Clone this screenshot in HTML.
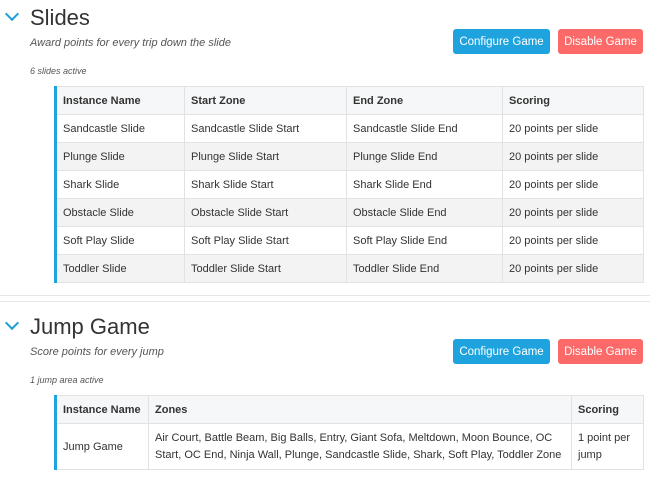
<!DOCTYPE html>
<html><head><style>
*{box-sizing:border-box;margin:0;padding:0}
body{width:650px;height:480px;background:#fff;font-family:"Liberation Sans",sans-serif;color:#333;position:relative;overflow:hidden}
h1{position:absolute;font-weight:normal;font-size:22px;color:#333;left:30px}
.chev{position:absolute;left:7px;width:10px;height:10px;border-right:2px solid #1e9fd6;border-bottom:2px solid #1e9fd6;transform:rotate(45deg)}
.sub{position:absolute;left:30px;font-style:italic;font-size:11px;color:#555}
.cnt{position:absolute;left:30px;font-style:italic;font-size:9px;color:#555}
.btn{position:absolute;height:25px;border-radius:3px;color:#fff;font-size:11.5px;display:flex;align-items:center;justify-content:center}
.cfg{background:#1fa3de;left:453px;width:97px}
.dis{background:#fb6a68;left:558px;width:85px}
table{position:absolute;left:54px;border-collapse:collapse;border-left:3px solid #1fa3de;font-size:11px;table-layout:fixed}
td,th{border:1px solid #e2e2e2;padding:0 6px;text-align:left;height:28px;color:#333}
th{background:#f6f7f8;font-weight:bold}
tr.g td{background:#f3f3f3}
.line{position:absolute;left:0;width:650px;height:1px;background:#e5e5e5}
</style></head><body>
<div class="chev" style="top:9px"></div>
<h1 style="top:5px">Slides</h1>
<div class="sub" style="top:37px">Award points for every trip down the slide</div>
<div class="cnt" style="top:66px">6 slides active</div>
<div class="btn cfg" style="top:29px">Configure Game</div>
<div class="btn dis" style="top:29px">Disable Game</div>
<table style="top:86px;width:588px">
<colgroup><col style="width:129px"><col style="width:162px"><col style="width:156px"><col style="width:141px"></colgroup>
<tr><th>Instance Name</th><th>Start Zone</th><th>End Zone</th><th>Scoring</th></tr>
<tr><td>Sandcastle Slide</td><td>Sandcastle Slide Start</td><td>Sandcastle Slide End</td><td>20 points per slide</td></tr>
<tr class="g"><td>Plunge Slide</td><td>Plunge Slide Start</td><td>Plunge Slide End</td><td>20 points per slide</td></tr>
<tr><td>Shark Slide</td><td>Shark Slide Start</td><td>Shark Slide End</td><td>20 points per slide</td></tr>
<tr class="g"><td>Obstacle Slide</td><td>Obstacle Slide Start</td><td>Obstacle Slide End</td><td>20 points per slide</td></tr>
<tr><td>Soft Play Slide</td><td>Soft Play Slide Start</td><td>Soft Play Slide End</td><td>20 points per slide</td></tr>
<tr class="g"><td>Toddler Slide</td><td>Toddler Slide Start</td><td>Toddler Slide End</td><td>20 points per slide</td></tr>
</table>
<div class="line" style="top:295px"></div>
<div class="line" style="top:301px"></div>
<div class="chev" style="top:318px"></div>
<h1 style="top:314px">Jump Game</h1>
<div class="sub" style="top:346px">Score points for every jump</div>
<div class="cnt" style="top:375px">1 jump area active</div>
<div class="btn cfg" style="top:339px">Configure Game</div>
<div class="btn dis" style="top:339px">Disable Game</div>
<table style="top:395px;width:588px">
<colgroup><col style="width:93px"><col style="width:423px"><col style="width:72px"></colgroup>
<tr><th>Instance Name</th><th>Zones</th><th>Scoring</th></tr>
<tr><td style="height:46px">Jump Game</td><td style="line-height:17px">Air Court, Battle Beam, Big Balls, Entry, Giant Sofa, Meltdown, Moon Bounce, OC Start, OC End, Ninja Wall, Plunge, Sandcastle Slide, Shark, Soft Play, Toddler Zone</td><td style="line-height:17px">1 point per jump</td></tr>
</table>
</body></html>
